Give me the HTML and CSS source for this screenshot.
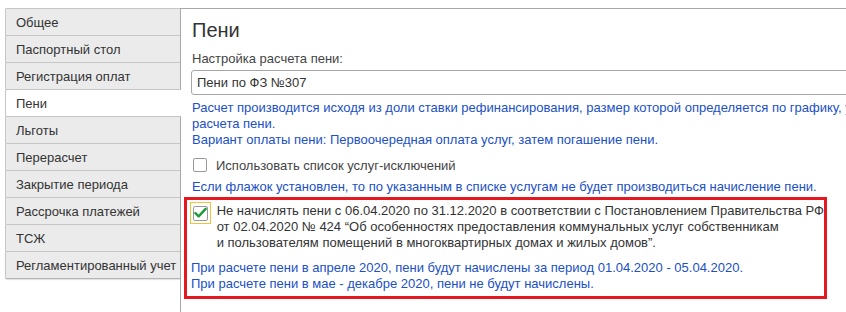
FILE: index.html
```html
<!DOCTYPE html>
<html>
  <head>
    <meta charset="utf-8">
    <link rel="stylesheet" href="styles.css">
  </head>
  <body>
    <div class="layout">
      <div class="tabs">
        <div class="tab">Общее</div>
        <div class="tab">Паспортный стол</div>
        <div class="tab">Регистрация оплат</div>
        <div class="tab active">Пени</div>
        <div class="tab">Льготы</div>
        <div class="tab">Перерасчет</div>
        <div class="tab">Закрытие периода</div>
        <div class="tab">Рассрочка платежей</div>
        <div class="tab">ТСЖ</div>
        <div class="tab">Регламентированный учет</div>
      </div>
      <div class="panel">
        <h1>Пени</h1>
        <div class="label">Настройка расчета пени:</div>
        <div class="field">Пени по ФЗ №307</div>
        <div class="hint hint-top">
          <div>Расчет производится исходя из доли ставки рефинансирования, размер которой определяется по графику, указанному в настройке</div>
          <div>расчета пени.</div>
          <div>Вариант оплаты пени: Первоочередная оплата услуг, затем погашение пени.</div>
        </div>
        <label class="check-row">
          <span class="checkbox"></span>
          <span>Использовать список услуг-исключений</span>
        </label>
        <div class="hint hint-flag">Если флажок установлен, то по указанным в списке услугам не будет производиться начисление пени.</div>
        <div class="highlight">
          <div class="check-row check-row-multi">
            <span class="focus">
              <span class="checkbox checked">
                <svg width="14" height="12" viewBox="0 0 14 12"><path d="M1.5 6.2 L5 9.6 L12.5 1.5" fill="none" stroke="#1f9a3a" stroke-width="2.6" stroke-linecap="round" stroke-linejoin="round"/></svg>
              </span>
            </span>
            <div class="check-text">
              <div>Не начислять пени с 06.04.2020 по 31.12.2020 в соответствии с Постановлением Правительства РФ</div>
              <div>от 02.04.2020 № 424 “Об особенностях предоставления коммунальных услуг собственникам</div>
              <div>и пользователям помещений в многоквартирных домах и жилых домов”.</div>
            </div>
          </div>
          <div class="hint hint-box">
            <div>При расчете пени в апреле 2020, пени будут начислены за период 01.04.2020 - 05.04.2020.</div>
            <div>При расчете пени в мае - декабре 2020, пени не будут начислены.</div>
          </div>
        </div>
      </div>
    </div>
  </body>
</html>
```

FILE: styles.css
```css
* {
  box-sizing: border-box;
  margin: 0;
  padding: 0;
}

body {
  width: 846px;
  height: 312px;
  overflow: hidden;
  background: #fff;
  color: #333;
  font-family: 'Liberation Sans', Arial, sans-serif;
  font-size: 13px;
}

.layout {
  display: flex;
  padding-top: 8px;
  height: 312px;
}

.tabs {
  width: 175px;
  margin-left: 5px;
  display: flex;
  flex-direction: column;
  position: relative;
  z-index: 1;
}

.tab {
  height: 28px;
  margin-bottom: -1px;
  padding-left: 10px;
  display: flex;
  align-items: center;
  background: #ebebeb;
  border: 1px solid #c6c6c6;
  border-bottom-color: #b4b4b4;
  border-right: none;
  border-radius: 2px 0 0 2px;
  color: #333;
  white-space: nowrap;
}

.tab:last-child {
  box-shadow: 0 1px 1px rgba(0, 0, 0, 0.12);
}

.tab.active {
  background: #fff;
  margin-right: -1px;
}

.panel {
  flex: 1;
  border-left: 1px solid #a8a8a8;
  border-top: 1px solid #a8a8a8;
  padding: 9px 0 0 11px;
  min-width: 0;
}

h1 {
  font-size: 20px;
  font-weight: normal;
  line-height: 24px;
  color: #333;
  margin-bottom: 9px;
}

.label {
  line-height: 16px;
  color: #444;
  margin-bottom: 3px;
}

.field {
  width: 720px;
  height: 25px;
  margin-left: -1px;
  padding-left: 5px;
  border: 1px solid #a8a8a8;
  border-radius: 3px;
  line-height: 23px;
  color: #333;
  white-space: nowrap;
}

.hint {
  color: #2050c4;
  line-height: 16px;
  white-space: nowrap;
}

.hint-top {
  margin-top: 5px;
}

.hint-flag {
  margin-top: 3px;
}

.check-row {
  display: flex;
  align-items: center;
  gap: 9px;
  height: 22px;
  margin-top: 6px;
  margin-left: 1px;
  color: #444;
}

.checkbox {
  width: 14px;
  height: 14px;
  border: 1px solid #999;
  border-radius: 2px;
  background: #fff;
  display: flex;
  align-items: center;
  justify-content: center;
  flex-shrink: 0;
}

.highlight {
  width: 643px;
  height: 102px;
  margin-top: 2px;
  margin-left: -8px;
  border: 3px solid #e5171f;
  padding: 2px 0 0 3px;
}

.check-row-multi {
  align-items: flex-start;
  height: auto;
  margin: 0;
  gap: 6px;
  color: #333;
}

.focus {
  width: 23px;
  height: 22px;
  border: 1px solid #f0c43a;
  display: flex;
  align-items: center;
  justify-content: center;
}

.checkbox.checked {
  width: 15px;
  height: 15px;
}

.check-text {
  padding-top: 1px;
  line-height: 16px;
  white-space: nowrap;
}

.hint-box {
  margin-top: 9px;
  margin-left: 1px;
}
```
